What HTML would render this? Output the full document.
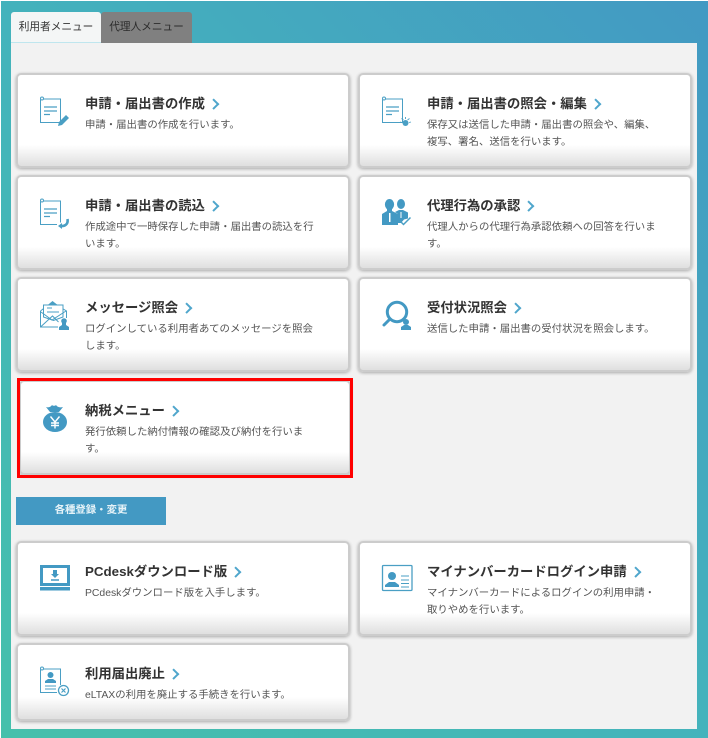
<!DOCTYPE html>
<html lang="ja">
<head>
<meta charset="utf-8">
<style>
html,body{margin:0;padding:0;width:708px;height:738px;overflow:hidden;background:#fff;}
body{position:relative;font-family:"Liberation Sans","Noto Sans CJK JP",sans-serif;color:#333;}
#bg{position:absolute;left:1px;top:1px;width:707px;height:737px;background:linear-gradient(45deg,#45c0ab 0%,#44b3bc 50%,#4399c3 100%);}
#panel{position:absolute;left:11px;top:43px;width:686px;height:686px;background:#f2f2f2;}
.tab{position:absolute;top:12px;height:31px;line-height:31px;font-size:10.67px;text-align:center;border-radius:3px 3px 0 0;box-sizing:border-box;}
#t1{left:11px;width:90px;background:#f4f6f6;border-bottom:1px solid #bfe6ee;color:#333;}
#t2{left:101px;width:91px;background:#808080;color:#2b2b2b;}
.card{position:absolute;box-sizing:border-box;width:334px;height:95px;border:2px solid #ccc;border-radius:5px;
background:linear-gradient(to bottom,#fff 0,#fff 70px,#dfdfdf 91px);box-shadow:0 1px 3px rgba(0,0,0,.3);}
.l{left:16px}.r{left:358px}
.ti{position:absolute;left:67px;top:19px;font-size:13.33px;line-height:20px;font-weight:bold;color:#333;white-space:nowrap;}
.ti i{display:inline-block;width:5.5px;height:5.5px;border-top:2px solid #4fa6cc;border-right:2px solid #4fa6cc;transform:rotate(45deg);margin-left:5px;position:relative;top:-1px;}
.de{position:absolute;left:67px;top:42px;width:244px;font-size:10.4px;line-height:17px;color:#555;white-space:nowrap;}
#red{position:absolute;left:17px;top:378px;width:336px;height:100px;box-sizing:border-box;border:3px solid #f00;z-index:3;}
#btn{position:absolute;left:16px;top:497px;width:150px;height:28px;background:#4399c3;color:#e6f3f8;font-size:10.4px;font-weight:bold;line-height:28px;text-align:center;}
#ic{position:absolute;left:0;top:0;z-index:2;}
</style>
</head>
<body>
<div id="bg"></div>
<div id="panel"></div>
<div class="tab" id="t1">利用者メニュー</div>
<div class="tab" id="t2">代理人メニュー</div>

<div class="card l" style="top:73px"><div class="ti">申請・届出書の作成<i></i></div><div class="de">申請・届出書の作成を行います。</div></div>
<div class="card r" style="top:73px"><div class="ti">申請・届出書の照会・編集<i></i></div><div class="de">保存又は送信した申請・届出書の照会や、編集、<br>複写、署名、送信を行います。</div></div>
<div class="card l" style="top:175px"><div class="ti">申請・届出書の読込<i></i></div><div class="de">作成途中で一時保存した申請・届出書の読込を行<br>います。</div></div>
<div class="card r" style="top:175px"><div class="ti">代理行為の承認<i></i></div><div class="de">代理人からの代理行為承認依頼への回答を行いま<br>す。</div></div>
<div class="card l" style="top:277px"><div class="ti">メッセージ照会<i></i></div><div class="de">ログインしている利用者あてのメッセージを照会<br>します。</div></div>
<div class="card r" style="top:277px"><div class="ti">受付状況照会<i></i></div><div class="de">送信した申請・届出書の受付状況を照会します。</div></div>
<div class="card l" style="top:380px;left:19px;width:332px"><div class="ti" style="left:64px">納税メニュー<i></i></div><div class="de" style="left:64px">発行依頼した納付情報の確認及び納付を行いま<br>す。</div></div>
<div id="red"></div>
<div id="btn">各種登録・変更</div>
<div class="card l" style="top:541px"><div class="ti">PCdeskダウンロード版<i></i></div><div class="de">PCdeskダウンロード版を入手します。</div></div>
<div class="card r" style="top:541px"><div class="ti">マイナンバーカードログイン申請<i></i></div><div class="de">マイナンバーカードによるログインの利用申請・<br>取りやめを行います。</div></div>
<div class="card l" style="top:643px;height:78px;background:linear-gradient(to bottom,#fff 0,#fff 52px,#dfdfdf 74px)"><div class="ti">利用届出廃止<i></i></div><div class="de">eLTAXの利用を廃止する手続きを行います。</div></div>

<svg id="ic" width="708" height="738" viewBox="0 0 708 738" fill="none" stroke="#4a9fc4" stroke-width="1">
  <!-- doc + pencil -->
  <g>
    <path d="M43 99H60.500V122.500H40.500V99.500"/><circle cx="42" cy="98.500" r="1.500"/>
    <path d="M44 107H57M44 111H57M44 114.500H50" stroke-width="1.200"/>
    <path d="M58 126l1-4 7-7 3 3-7 7z" fill="#4a9fc4" stroke="none"/>
  </g>
  <!-- doc + gear -->
  <g>
    <path d="M385 99H402.500V122.500H382.500V99.500"/><circle cx="384" cy="98.500" r="1.500"/>
    <path d="M386 107H399M386 111H399M386 114.500H392" stroke-width="1.200"/>
    <circle cx="405.500" cy="123" r="3" fill="#4a9fc4" stroke="none"/>
    <path d="M400 122l2 .5M401.500 118.500l2 1.500M405.500 117v2M409.500 118.500l-2 1.500M411 122l-2 .5" stroke-width=".9"/>
  </g>
  <!-- doc + return -->
  <g>
    <path d="M43 201H60.500V222.500M57 224.500H40.500V201.500"/><circle cx="42" cy="200.500" r="1.500"/>
    <path d="M44 209H57M44 213H57M44 216.500H50" stroke-width="1.200"/>
    <path d="M67.500 219c1 5.500-3 7.500-7 7" stroke-width="2.600"/><path d="M58 226l4-3v6z" fill="#4a9fc4" stroke="none"/>
  </g>
  <!-- people check -->
  <g fill="#4399c3" stroke="none">
    <ellipse cx="389.500" cy="204.500" rx="4.600" ry="5.500"/><rect x="387" y="208" width="5" height="4"/>
    <path d="M382 225V214l5-3h5l6 3v11z"/>
    <ellipse cx="401" cy="204" rx="4" ry="5"/>
    <path d="M395 212l4-2h4l5 2.500v6l-4 1-3 3.500h-3v-9z"/>
    <path d="M389 213h1.500v9H389z" fill="#fff"/><path d="M400.500 212h1v6h-1z" fill="#fff"/>
  </g>
  <path d="M400 221l3.500 3.500 7-7" stroke-width="1.500"/>
  <!-- envelope -->
  <g>
    <path d="M40.500 311v16H58M40.500 311l5-4M60 307l6.500 4v7"/>
    <path d="M46.500 306l6-5 6.500 5z" fill="#4a9fc4" stroke="none"/>
    <path d="M43.500 305H63V317l-9.500 3.500L43.500 317z" fill="#fff"/>
    <path d="M47 308H52M47 312H59"/>
    <path d="M40.500 327l12-11 6 6M41 312l11 8 14-9"/>
    <circle cx="64" cy="321" r="2.800" fill="#4399c3" stroke="none"/>
    <path d="M59 330v-3l3-2v-2h4v2l3 2v3z" fill="#4399c3" stroke="none"/>
  </g>
  <!-- search -->
  <g>
    <circle cx="397" cy="312" r="9.700" stroke="#4399c3" stroke-width="3"/>
    <path d="M389 320l-5 5" stroke="#4399c3" stroke-width="3" stroke-linecap="round"/>
    <circle cx="406" cy="322" r="3" fill="#4399c3" stroke="none"/>
    <path d="M401 330v-3l3-2h4l3 2v3z" fill="#4399c3" stroke="none"/>
  </g>
  <!-- money bag -->
  <g>
    <path d="M46 407c3 1 5-.5 6-2 1 1 3 1 4 0 1 1.500 3 3 7 2l-4 5h-9z" fill="#4399c3" stroke="none"/>
    <ellipse cx="55" cy="422" rx="12" ry="10" fill="#4399c3" stroke="none"/>
    <path d="M50.500 416.500l4.500 5.500 4.500-5.500M55 422V428.500M51 423H59M51 425.500H59" stroke="#fff" stroke-width="1.400"/>
  </g>
  <!-- PC download -->
  <g>
    <rect x="41.500" y="566.500" width="27" height="18" stroke="#4399c3" stroke-width="3" fill="none"/>
    <rect x="40" y="587" width="30" height="3.500" fill="#4399c3" stroke="none"/>
    <path d="M53 570h4v4h2l-4 4-4-4h2z" fill="#4399c3" stroke="none"/>
    <path d="M51 580H59" stroke="#4399c3" stroke-width="1.500"/>
  </g>
  <!-- my number card -->
  <g>
    <rect x="382.500" y="565.500" width="29.500" height="25" rx="1" stroke-width="1.300"/>
    <circle cx="392" cy="576" r="4" fill="#4399c3" stroke="none"/>
    <path d="M385 587v-2l4-3h6l4 3v2z" fill="#4399c3" stroke="none"/>
    <path d="M401 576H409M401 580H409M401 583.500H409M401 587H409"/>
  </g>
  <!-- doc + x -->
  <g>
    <path d="M43 669H60.500V685M57 692.500H40.500V669.500"/><circle cx="42" cy="668.500" r="1.500"/>
    <circle cx="50.500" cy="675" r="3" fill="#4399c3" stroke="none"/>
    <path d="M45 683v-2l3-2h5l3 2v2z" fill="#4399c3" stroke="none"/>
    <path d="M45 686H56M45 689H56"/>
    <circle cx="63.500" cy="690.500" r="5" stroke-width="1.300" fill="#fff"/>
    <path d="M61.500 688.500l4 4M65.500 688.500l-4 4" stroke-width="1.200"/>
  </g>
</svg>
</body>
</html>
